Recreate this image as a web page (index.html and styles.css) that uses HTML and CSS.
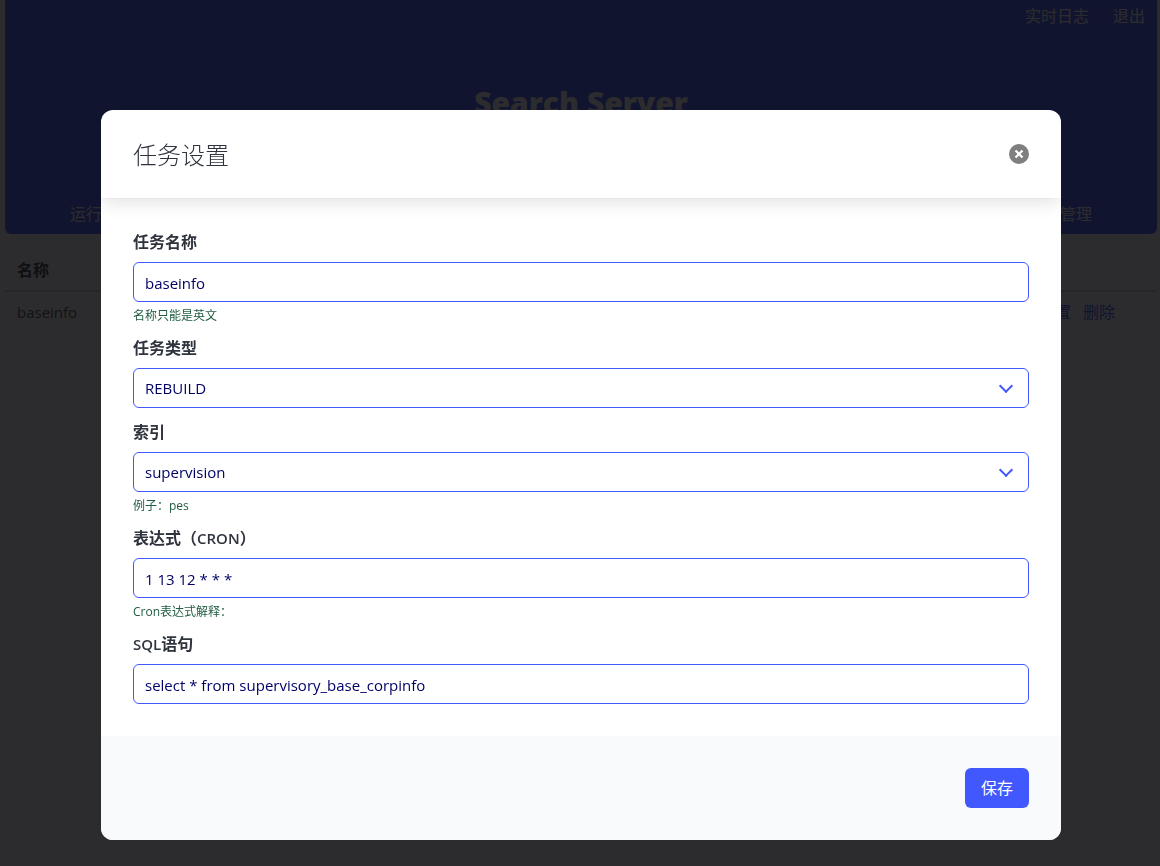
FILE: index.html
```html
<!DOCTYPE html>
<html lang="zh-CN">
<head>
<meta charset="utf-8">
<meta name="viewport" content="width=device-width, initial-scale=1">
<title>Search Server</title>
<link rel="stylesheet" href="styles.css">
</head>
<body>
<div class="page">
  <header class="hero">
    <nav class="topnav">
      <a href="#log">实时日志</a>
      <a href="#logout">退出</a>
    </nav>
    <h1 class="hero-title">Search Server</h1>
    <nav class="tabs">
      <a href="#run">运行</a>
      <a href="#manage">管理</a>
    </nav>
  </header>
  <table class="tasks">
    <thead>
      <tr><th>名称</th><th></th></tr>
    </thead>
    <tbody>
      <tr>
        <td>baseinfo</td>
        <td class="actions"><a href="#edit">设置</a><a href="#delete">删除</a></td>
      </tr>
    </tbody>
  </table>
  <footer class="page-footer"></footer>
</div>

<div class="overlay">
  <form class="modal" role="dialog" aria-modal="true" aria-labelledby="dialog-title">
    <header class="modal-head">
      <h2 class="modal-title" id="dialog-title">任务设置</h2>
      <button class="close" type="button" aria-label="关闭">
        <svg viewBox="0 0 20 20" width="20" height="20" aria-hidden="true">
          <path d="M6.5 6.5L13.5 13.5M13.5 6.5L6.5 13.5" fill="none" stroke="#fff" stroke-width="2.2"/>
        </svg>
      </button>
    </header>
    <div class="modal-body">
      <div class="field">
        <label for="name">任务名称</label>
        <input class="control" id="name" type="text" value="baseinfo">
        <p class="help">名称只能是英文</p>
      </div>
      <div class="field">
        <label for="type">任务类型</label>
        <div class="select">
          <select class="control" id="type"><option>REBUILD</option></select>
        </div>
      </div>
      <div class="field">
        <label for="index">索引</label>
        <div class="select">
          <select class="control" id="index"><option>supervision</option></select>
        </div>
        <p class="help">例子：pes</p>
      </div>
      <div class="field">
        <label for="cron">表达式（<span class="latin">CRON</span>）</label>
        <input class="control" id="cron" type="text" value="1 13 12 * * *">
        <p class="help">Cron表达式解释：</p>
      </div>
      <div class="field">
        <label for="sql"><span class="latin">SQL</span>语句</label>
        <input class="control" id="sql" type="text" value="select * from supervisory_base_corpinfo">
      </div>
    </div>
    <footer class="modal-foot">
      <button class="save" type="submit">保存</button>
    </footer>
  </form>
</div>
</body>
</html>
```
FILE: styles.css
```css
*,
*::after {
  box-sizing: border-box;
}

body,
h1,
h2,
p {
  margin: 0;
}

body {
  min-height: 100vh;
  background: #fff;
  color: #4a4a4a;
  font-family: "Open Sans", "Noto Sans CJK SC", sans-serif;
  font-size: 16px;
  line-height: 24px;
}

a {
  color: #4258ff;
  text-decoration: none;
}

button,
input,
select {
  font-family: inherit;
}

.page {
  padding: 0 3px 0 5px;
}

.hero {
  display: flex;
  flex-direction: column;
  justify-content: space-between;
  min-height: 234px;
  padding: 4px 12px 8px;
  border-radius: 0 0 6px 6px;
  background: #4258ff;
}

.hero a {
  color: #fff;
}

.topnav {
  display: flex;
  justify-content: flex-end;
  gap: 24px;
}

.hero-title {
  padding-bottom: 24px;
  color: #fff;
  font-size: 30px;
  font-weight: 800;
  line-height: 36px;
  text-align: center;
}

.tabs {
  display: flex;
  justify-content: space-between;
  padding: 0 53px;
}

.tasks {
  width: 100%;
  border-collapse: collapse;
  font-size: 15px;
}

.tasks th,
.tasks td {
  padding: 8px 12px;
  text-align: left;
}

.tasks th {
  height: 57px;
  padding-top: 23px;
  border-bottom: 2px solid #dbdbdb;
  color: #363636;
  font-size: 16px;
}

.tasks .actions {
  display: flex;
  justify-content: flex-end;
  gap: 12px;
  padding-right: 42px;
  font-size: 16px;
}

.page-footer {
  min-height: 168px;
  margin-top: 113px;
  background: #fafafa;
}

.overlay {
  position: fixed;
  inset: 0;
  display: flex;
  justify-content: center;
  align-items: flex-start;
  padding: 110px 0 26px 2px;
  overflow: auto;
  background: rgba(9, 9, 12, 0.86);
}

.modal {
  width: 100%;
  max-width: 960px;
  overflow: hidden;
  border-radius: 12px;
  background: #fff;
}

.modal-head {
  display: flex;
  justify-content: space-between;
  align-items: center;
  padding: 32px;
  box-shadow: 0 8px 16px -2px rgba(10, 10, 10, 0.1), 0 0 0 1px rgba(10, 10, 10, 0.02);
}

.modal-title {
  padding-top: 2px;
  color: #2e333d;
  font-size: 24px;
  font-weight: 300;
  line-height: 22px;
}

.close {
  width: 20px;
  height: 20px;
  margin: 2px 0;
  padding: 0;
  border: 0;
  border-radius: 50%;
  background: #7f7f7f;
}

.close svg {
  display: block;
}

.modal-body {
  display: flex;
  flex-direction: column;
  gap: 12px;
  padding: 32px;
}

.field label {
  display: block;
  margin-bottom: 8px;
  color: #2e333d;
  font-weight: 600;
}

.latin {
  font-size: 15px;
}

.control {
  display: block;
  width: 100%;
  height: 40px;
  padding: 2px 11px 0;
  border: 1px solid #4258ff;
  border-radius: 6px;
  background: #fff;
  color: #000066;
  font-size: 15px;
  font-weight: 400;
}

.select {
  position: relative;
}

.select .control {
  padding-top: 0;
  appearance: none;
}

.select::after {
  content: "";
  position: absolute;
  top: 13px;
  right: 18px;
  width: 10px;
  height: 10px;
  border: solid #4258ff;
  border-width: 0 2px 2px 0;
  transform: rotate(45deg);
  pointer-events: none;
}

.help {
  padding-top: 5px;
  color: #1f5c40;
  font-size: 12px;
  line-height: 17px;
}

.modal-foot {
  display: flex;
  justify-content: flex-end;
  padding: 32px;
  background: #f9fafc;
}

.save {
  height: 40px;
  padding: 0 16px 2px;
  border: 0;
  border-radius: 6px;
  background: #4258ff;
  color: #fff;
  font-size: 16px;
}
```
